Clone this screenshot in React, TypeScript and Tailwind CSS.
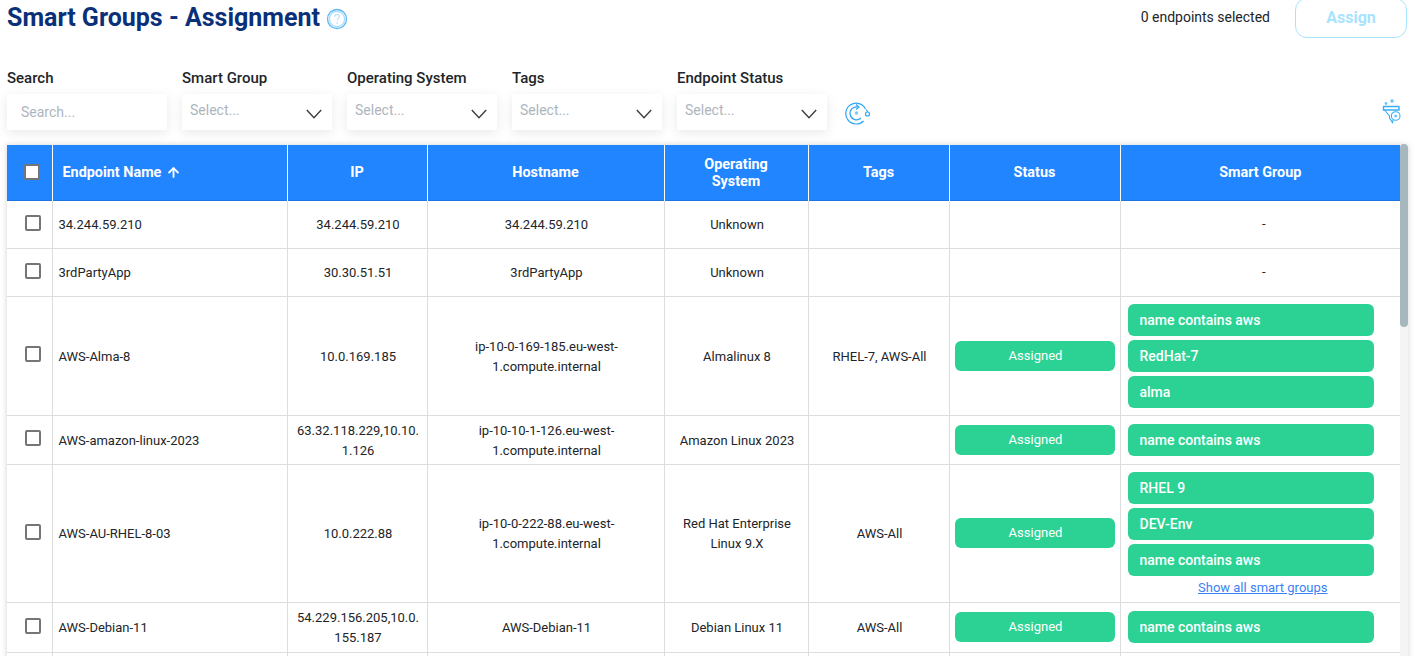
import { ArrowUp } from 'lucide-react'

interface Row {
  name: string
  ip: string
  host: string
  os: string
  tags?: string
  assigned?: boolean
  groups?: string[]
  showAll?: boolean
  height: string
}

const rows: Row[] = [
  { name: '34.244.59.210', ip: '34.244.59.210', host: '34.244.59.210', os: 'Unknown', height: 'h-[48px]' },
  { name: '3rdPartyApp', ip: '30.30.51.51', host: '3rdPartyApp', os: 'Unknown', height: 'h-[48px]' },
  {
    name: 'AWS-Alma-8',
    ip: '10.0.169.185',
    host: 'ip-10-0-169-185.eu-west-1.compute.internal',
    os: 'Almalinux 8',
    tags: 'RHEL-7, AWS-All',
    assigned: true,
    groups: ['name contains aws', 'RedHat-7', 'alma'],
    height: 'h-[119px]',
  },
  {
    name: 'AWS-amazon-linux-2023',
    ip: '63.32.118.229,10.10.1.126',
    host: 'ip-10-10-1-126.eu-west-1.compute.internal',
    os: 'Amazon Linux 2023',
    assigned: true,
    groups: ['name contains aws'],
    height: 'h-[49px]',
  },
  {
    name: 'AWS-AU-RHEL-8-03',
    ip: '10.0.222.88',
    host: 'ip-10-0-222-88.eu-west-1.compute.internal',
    os: 'Red Hat Enterprise Linux 9.X',
    tags: 'AWS-All',
    assigned: true,
    groups: ['RHEL 9', 'DEV-Env', 'name contains aws'],
    showAll: true,
    height: 'h-[138px]',
  },
  {
    name: 'AWS-Debian-11',
    ip: '54.229.156.205,10.0.155.187',
    host: 'AWS-Debian-11',
    os: 'Debian Linux 11',
    tags: 'AWS-All',
    assigned: true,
    groups: ['name contains aws'],
    height: 'h-[50px]',
  },
]

function Chevron() {
  return (
    <svg width="16" height="10" viewBox="0 0 16 10" fill="none" stroke="#3d3d3d" strokeWidth="1.4" className="shrink-0">
      <path d="M.8 1 8 8.800 15.200 1" />
    </svg>
  )
}

function HelpIcon() {
  return (
    <svg width="22" height="22" viewBox="0 0 22 22" fill="none" className="ml-[6px] shrink-0">
      <circle cx="11" cy="11" r="9.500" stroke="#5cb8f5" strokeWidth="1.300" />
      <circle cx="11" cy="11" r="7.600" stroke="#a5dbfb" strokeWidth="1.200" />
      <path d="M8.600 8.800c0-1.500 1.100-2.400 2.500-2.400s2.400.9 2.400 2.200c0 1.800-2.400 1.900-2.400 3.800" stroke="#bfe4fb" strokeWidth="1.300" />
      <circle cx="11.100" cy="15" r=".9" fill="#bfe4fb" />
    </svg>
  )
}

function ResetIcon() {
  return (
    <svg width="26" height="26" viewBox="0 0 26 26" fill="none" stroke="#2ea6f5" strokeWidth="1.200" className="shrink-0">
      <path d="M20.500 9A10.400 10.400 0 1 0 18.500 21" />
      <path d="M13 7A6.500 6.500 0 1 0 16 18" />
      <path d="M11 4.500 14 7l-3 2.500" />
      <circle cx="11.500" cy="13" r="1.800" fill="#7cc8f8" stroke="none" />
      <circle cx="22.500" cy="14" r="2" />
      <path d="M21.500 9.500 22.500 12" />
    </svg>
  )
}

function FilterIcon() {
  return (
    <svg width="22" height="25" viewBox="0 0 22 25" fill="none" stroke="#35aef6" strokeWidth="1.100" className="shrink-0">
      <circle cx="11" cy="2" r="1.800" fill="#6cc6f9" stroke="none" />
      <circle cx="5" cy="4.500" r="1.400" fill="#6cc6f9" stroke="none" />
      <path d="M2 7.500h16.500M2.500 7.500v3.500h15.500V7.500" strokeWidth="1.400" />
      <path d="M3.500 11 8.500 17v2l3 4.500.5-2.500" />
      <circle cx="14.700" cy="17" r="4.300" />
      <circle cx="14.700" cy="17" r="1.500" fill="#6cc6f9" stroke="none" />
    </svg>
  )
}

function Checkbox({ header }: { header?: boolean }) {
  return (
    <span
      className={`mx-auto block h-4 w-4 rounded-[2px] border-2 border-[#757575] ${header ? 'bg-white' : 'bg-transparent'}`}
    />
  )
}

function Filter({ label, wide, children }: { label: string; wide?: boolean; children: React.ReactNode }) {
  return (
    <div className={wide ? 'w-[160px]' : 'w-[150px]'}>
      <div className="mb-[6px] text-[15px] leading-[20px] font-medium text-[#212529]">{label}</div>
      <div className="flex h-[36px] items-center justify-between bg-white shadow-[0_3px_12px_rgba(0,0,0,0.09)]">
        {children}
      </div>
    </div>
  )
}

function SelectFilter({ label }: { label: string }) {
  return (
    <Filter label={label}>
      <span className="-mt-1 pl-[8px] text-[14px] text-[#adb5bd]">Select...</span>
      <span className="mr-[10px] mt-[3px]">
        <Chevron />
      </span>
    </Filter>
  )
}

const headCell = 'border-l border-white px-2 text-center text-[14.4px] leading-[17px] font-bold text-white'
const bodyCell = 'border-l border-b border-[#dddddd] text-center align-middle text-[13px] leading-[20px] text-[#212529]'

export default function App() {
  return (
    <div className="h-screen overflow-hidden bg-white font-['Roboto',sans-serif]">
      <div className="flex h-[38px] items-center pl-[7px] pr-[9px]">
        <h1 className="-mt-[2px] text-[25px] leading-[36px] font-bold text-[#0a3079]">Smart Groups - Assignment</h1>
        <HelpIcon />
        <span className="ml-auto -mt-[4px] text-[14px] text-[#212529]">0 endpoints selected</span>
        <button className="ml-[25px] -mt-[2px] h-[40px] w-[112px] rounded-xl border border-[#a8e3fd] text-[16px] font-bold text-[#a8e3fd]">
          Assign
        </button>
      </div>

      <div className="mt-[30px] flex items-end pl-[7px] pr-[13px]">
        <div className="flex gap-[15px]">
          <Filter label="Search" wide>
            <span className="pl-[14px] text-[14px] text-[#adb5bd]">Search...</span>
          </Filter>
          <SelectFilter label="Smart Group" />
          <SelectFilter label="Operating System" />
          <SelectFilter label="Tags" />
          <SelectFilter label="Endpoint Status" />
        </div>
        <span className="mb-[4px] ml-[18px]">
          <ResetIcon />
        </span>
        <span className="mb-[6px] ml-auto">
          <FilterIcon />
        </span>
      </div>

      <div className="ml-[7px] mr-[8px] mt-[15px] flex shadow-[0_0_6px_rgba(0,0,0,0.18)]">
        <table className="w-[1393px] shrink-0 table-fixed border-collapse">
          <colgroup>
            <col className="w-[45px]" />
            <col className="w-[235px]" />
            <col className="w-[140px]" />
            <col className="w-[237px]" />
            <col className="w-[144px]" />
            <col className="w-[141px]" />
            <col className="w-[171px]" />
            <col className="w-[280px]" />
          </colgroup>
          <thead>
            <tr className="h-[55px] border-b border-[#1b74e0] bg-[#2185ff]">
              <th className="pl-[5px]">
                <Checkbox header />
              </th>
              <th className={`${headCell} text-left`}>
                <span className="flex items-center gap-[5px] pl-[2px]">
                  Endpoint Name <ArrowUp size={15} strokeWidth={3} />
                </span>
              </th>
              <th className={headCell}>IP</th>
              <th className={headCell}>Hostname</th>
              <th className={`${headCell} pt-[2px]`}>
                Operating
                <br />
                System
              </th>
              <th className={headCell}>Tags</th>
              <th className={headCell}>Status</th>
              <th className={headCell}>Smart Group</th>
            </tr>
          </thead>
          <tbody>
            {rows.map((row) => (
              <tr key={row.name} className={row.height}>
                <td className="border-b border-[#dddddd] pl-[7px] align-middle">
                  <span className="-mt-[3px] block">
                    <Checkbox />
                  </span>
                </td>
                <td className={`${bodyCell} pl-[6px] pt-[2px] text-left`}>{row.name}</td>
                <td className={`${bodyCell} break-words pl-[7px] pr-[5px] pt-[2px]`}>{row.ip}</td>
                <td className={`${bodyCell} pl-[42px] pr-[40px] pt-[2px]`}>{row.host}</td>
                <td className={`${bodyCell} pl-[12px] pr-[10px] pt-[2px]`}>{row.os}</td>
                <td className={`${bodyCell} pl-[7px] pr-[5px] pt-[2px]`}>{row.tags}</td>
                <td className={`${bodyCell} px-[5px]`}>
                  {row.assigned && (
                    <div className="flex h-[30px] w-[160px] items-center justify-center rounded-md bg-[#2bd294] pl-[2px] text-white">
                      Assigned
                    </div>
                  )}
                </td>
                <td className={`${bodyCell} pl-[7px] pr-0`}>
                  {row.groups ? (
                    <div className="flex flex-col gap-1">
                      {row.groups.map((group) => (
                        <div
                          key={group}
                          className="flex h-[32px] w-[246px] items-center rounded-md bg-[#2bd294] pl-3 text-[14px] font-medium text-white"
                        >
                          {group}
                        </div>
                      ))}
                      {row.showAll && (
                        <a className="-mt-[4px] block pr-[2px] pt-[4px] leading-[15px] text-[#3b82f6] underline">
                          Show all smart groups
                        </a>
                      )}
                    </div>
                  ) : (
                    '-'
                  )}
                </td>
              </tr>
            ))}
            <tr className="h-[48px]">
              <td />
              <td className={bodyCell} />
              <td className={bodyCell} />
              <td className={bodyCell} />
              <td className={bodyCell} />
              <td className={bodyCell} />
              <td className={bodyCell} />
              <td className={bodyCell} />
            </tr>
          </tbody>
        </table>
        <div className="w-[8px] shrink-0 bg-[#f4f4f4]">
          <div className="-mt-px h-[183px] w-[8px] rounded-[4px] bg-[#a6b7bd]" />
        </div>
      </div>
    </div>
  )
}
